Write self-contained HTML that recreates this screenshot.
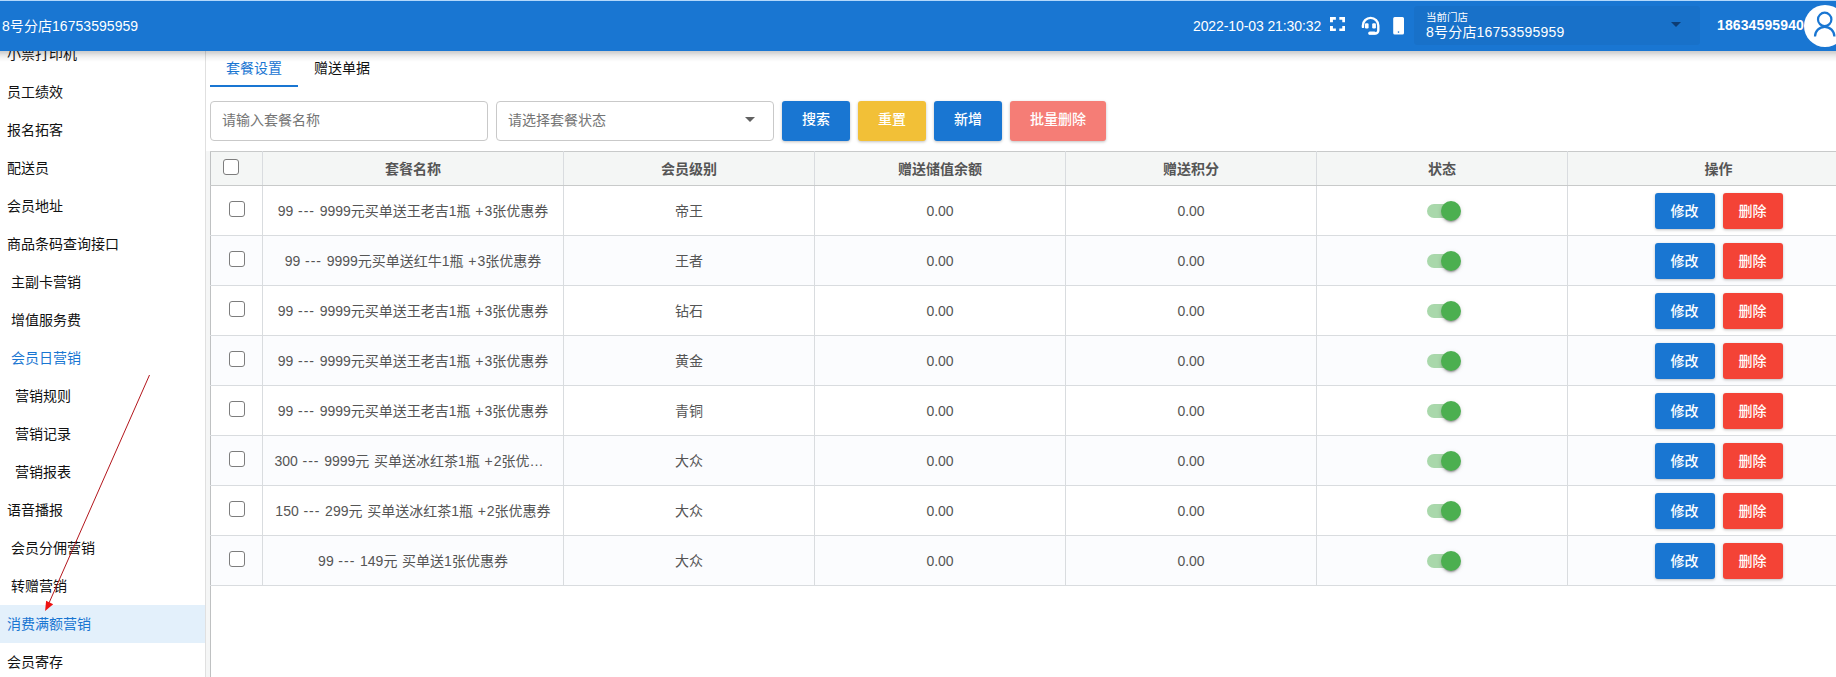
<!DOCTYPE html>
<html lang="zh-CN">
<head>
<meta charset="utf-8">
<title>消费满额营销</title>
<style>
*{box-sizing:border-box;margin:0;padding:0}
html,body{width:1836px;height:677px;overflow:hidden;background:#fff}
body{font-family:"Liberation Sans","Noto Sans CJK SC",sans-serif;font-size:14px;color:#212121;position:relative}
.hdr{position:absolute;left:0;top:0;width:1836px;height:50.5px;border-top:1px solid #b3d8fb;background:#1976d2;color:#fff;z-index:10}
.hsh{position:absolute;left:0;top:51px;width:1836px;height:11px;z-index:9;background:linear-gradient(rgba(0,0,0,.2),rgba(0,0,0,.16) 18%,rgba(0,0,0,.1) 36%,rgba(0,0,0,.06) 55%,rgba(0,0,0,.03) 73%,rgba(0,0,0,0))}
.hdr .title{position:absolute;left:2px;top:0;line-height:51px;font-size:14px;letter-spacing:.05px}
.hdr .time{position:absolute;left:1193px;top:0;line-height:51px;font-size:14px;letter-spacing:-.1px}
.hdr .ico{position:absolute;top:0}
.hdr .store{position:absolute;left:1414px;top:5px;width:286px;height:39px;background:rgba(0,0,0,.04);border-radius:3px}
.hdr .store .l1{position:absolute;left:12px;top:5px;font-size:10.5px;line-height:13px}
.hdr .store .l2{position:absolute;left:12px;top:17px;font-size:14px;line-height:18px;letter-spacing:.2px}
.hdr .store .arr{position:absolute;left:257px;top:16px;width:0;height:0;border-left:5px solid transparent;border-right:5px solid transparent;border-top:5px solid #0d3c73}
.hdr .phone{position:absolute;left:1717px;top:0;line-height:49px;font-size:14px;font-weight:bold;letter-spacing:.12px}
.hdr .avatar{position:absolute;left:1804.3px;top:3.900px;width:42px;height:42px;border-radius:50%;background:#fff}
.side{position:absolute;left:0;top:51px;width:206px;height:626px;border-right:1px solid #e0e0e0;background:#fff;overflow:hidden}
.side .it{position:absolute;left:0;width:205px;height:38px;line-height:38px;font-size:14px;color:#111;white-space:nowrap}
.side .it.act{background:#e3f0fb;color:#1976d2}
.side .it.blue{color:#1976d2}
.tabs{position:absolute;left:210px;top:51px;height:36px}
.tab{position:absolute;top:0;height:36px;line-height:34px;font-size:14px;white-space:nowrap}
.tab.a{left:0;width:88px;text-align:center;color:#1976d2;border-bottom:2px solid #1976d2}
.tab.b{left:104px;color:#111}
.inp{position:absolute;top:101px;height:40px;border:1px solid #c9c9c9;border-radius:4px;background:#fff;color:#757575;font-size:14px;line-height:36px;padding-left:11px}
.btn{position:absolute;top:101px;height:40px;border-radius:3px;color:#fff;font-size:14px;font-weight:500;line-height:37px;text-align:center;box-shadow:0 1px 3px rgba(0,0,0,.25)}
table{position:absolute;left:210px;top:151px;border-collapse:collapse;table-layout:fixed;width:1659px}
.vline{position:absolute;left:206px;top:151px;width:5px;height:526px;background:#f5f6f6;border-right:1px solid #bfc1c2}
td,th{border:1px solid #d9dcdf;text-align:center;font-size:14px;color:#555;height:50px;white-space:nowrap;overflow:hidden;text-overflow:ellipsis;padding:0 10px 2px;position:relative}
th{height:34px;background:#f4f6f5;color:#555;font-weight:bold;padding-bottom:1px;border-top-color:#c8caca;border-bottom-color:#c8caca}
tr.alt td{background:#fbfcfe}
td:first-child,th:first-child{border-left-color:#bfc1c2}
td.n{padding-bottom:0}
td.nm{word-spacing:.8px}
td.nm .w{letter-spacing:1px}
.cb{display:inline-block;width:16px;height:16px;border:1.300px solid #7d7d7d;border-radius:3px;background:#fff;vertical-align:middle}
td .cb{position:relative;top:-1px;left:.5px}
th .cb{position:absolute;left:12px;top:7px}
.sw{display:inline-block;position:relative;width:56px;height:40px;vertical-align:middle;top:1px;left:1px}
.sw i{position:absolute;left:12px;top:13px;width:32px;height:14px;border-radius:7px;background:#a9d8ab}
.sw b{position:absolute;left:26px;top:10px;width:20px;height:20px;border-radius:50%;background:#4caf50;box-shadow:0 3px 1px -2px rgba(0,0,0,.2),0 2px 2px 0 rgba(0,0,0,.14),0 1px 5px 0 rgba(0,0,0,.12)}
.ab{display:inline-block;width:60px;height:36px;line-height:36px;border-radius:3px;color:#fff;font-size:14px;font-weight:500;vertical-align:middle;box-shadow:0 1px 3px rgba(0,0,0,.25);position:relative;top:1px}
.ab.e{background:#1976d2;margin-right:8px}
.ab.d{background:#f44336}
</style>
</head>
<body>
<div class="hdr">
  <div class="title">8号分店16753595959</div>
  <div class="time">2022-10-03 21:30:32</div>
  <svg class="ico" style="left:1330px;top:16px" width="15.200" height="14.400" viewBox="0 0 15 15" preserveAspectRatio="none"><path d="M0 5.600V0h5.800v2.900H2.900v2.700zM9.200 0H15v5.600h-2.900V2.900H9.200zM15 9.400V15H9.200v-2.900h2.900V9.400zM5.800 15H0V9.400h2.900v2.700h2.900z" fill="#fff"/></svg>
  <svg class="ico" style="left:1361px;top:15px" width="20" height="20" viewBox="0 0 20 20"><path d="M1.900 10.900V9.600a7.700 7.700 0 0 1 15.400 0v4.900a3 3 0 0 1-3 3H8.600" fill="none" stroke="#fff" stroke-width="2.400" stroke-linecap="round"/><path d="M8.800 17.100H13.500" stroke="#fff" stroke-width="3" stroke-linecap="round"/><rect x="3.900" y="7.200" width="3.700" height="5.300" rx="1.200" fill="#fff"/><rect x="11.200" y="7.200" width="3.700" height="5.300" rx="1.200" fill="#fff"/></svg>
  <svg class="ico" style="left:1393px;top:16px" width="12" height="18" viewBox="0 0 12 18"><path d="M1.700 0h7.800a1.500 1.500 0 0 1 1.500 1.500v14.400a1.500 1.500 0 0 1-1.500 1.500H1.700a1.500 1.500 0 0 1-1.500-1.500V1.500A1.500 1.500 0 0 1 1.700 0z" fill="#fff"/><circle cx="5.500" cy="15.100" r=".8" fill="#1976d2"/></svg>
  <div class="store"><div class="l1">当前门店</div><div class="l2">8号分店16753595959</div><div class="arr"></div></div>
  <div class="phone">18634595940</div>
  <div class="avatar"><svg width="42" height="42" viewBox="0 0 42 42"><circle cx="20.700" cy="14.400" r="6.700" fill="none" stroke="#1976d2" stroke-width="2.200"/><path d="M11 31.500a9.700 9.700 0 0 1 19.400 0" fill="none" stroke="#1976d2" stroke-width="2.200"/></svg></div>
</div>
<div class="hsh"></div>
<div class="side">
  <div class="it" style="top:-16px;padding-left:7px">小票打印机</div>
  <div class="it" style="top:22px;padding-left:7px">员工绩效</div>
  <div class="it" style="top:60px;padding-left:7px">报名拓客</div>
  <div class="it" style="top:98px;padding-left:7px">配送员</div>
  <div class="it" style="top:136px;padding-left:7px">会员地址</div>
  <div class="it" style="top:174px;padding-left:7px">商品条码查询接口</div>
  <div class="it" style="top:212px;padding-left:11px">主副卡营销</div>
  <div class="it" style="top:250px;padding-left:11px">增值服务费</div>
  <div class="it blue" style="top:288px;padding-left:11px">会员日营销</div>
  <div class="it" style="top:326px;padding-left:15px">营销规则</div>
  <div class="it" style="top:364px;padding-left:15px">营销记录</div>
  <div class="it" style="top:402px;padding-left:15px">营销报表</div>
  <div class="it" style="top:440px;padding-left:7px">语音播报</div>
  <div class="it" style="top:478px;padding-left:11px">会员分佣营销</div>
  <div class="it" style="top:516px;padding-left:11px">转赠营销</div>
  <div class="it act" style="top:554px;padding-left:7px">消费满额营销</div>
  <div class="it" style="top:592px;padding-left:7px">会员寄存</div>
  <svg style="position:absolute;left:0;top:0" width="206" height="626" viewBox="0 0 206 626"><line x1="149.500" y1="324" x2="49" y2="552" stroke="#b3161c" stroke-width="1"/><path d="M45.100 560L46.100 549.800 53.200 553.300z" fill="#ee1111"/></svg>
</div>
<div class="tabs"><div class="tab a">套餐设置</div><div class="tab b">赠送单据</div></div>
<div class="inp" style="left:210px;width:278px">请输入套餐名称</div>
<div class="inp" style="left:496px;width:278px">请选择套餐状态<span style="position:absolute;left:248px;top:15px;width:0;height:0;border-left:5px solid transparent;border-right:5px solid transparent;border-top:5px solid #616161"></span></div>
<div class="btn" style="left:782px;width:68px;background:#1976d2">搜索</div>
<div class="btn" style="left:858px;width:68px;background:#f2c037">重置</div>
<div class="btn" style="left:934px;width:68px;background:#1976d2">新增</div>
<div class="btn" style="left:1010px;width:96px;background:#f57d76">批量删除</div>
<div class="vline"></div>
<table>
<colgroup><col style="width:52px"><col style="width:301px"><col style="width:251px"><col style="width:251px"><col style="width:251px"><col style="width:251px"><col style="width:302px"></colgroup>
<tr><th><span class="cb"></span></th><th>套餐名称</th><th>会员级别</th><th>赠送储值余额</th><th>赠送积分</th><th>状态</th><th>操作</th></tr>
<tr><td><span class="cb"></span></td><td class="nm">99 <span class="w">---</span> 9999元买单送王老吉1瓶 <span class="w">+</span>3张优惠券</td><td>帝王</td><td class="n">0.00</td><td class="n">0.00</td><td><span class="sw"><i></i><b></b></span></td><td><span class="ab e">修改</span><span class="ab d">删除</span></td></tr>
<tr class="alt"><td><span class="cb"></span></td><td class="nm">99 <span class="w">---</span> 9999元买单送红牛1瓶 <span class="w">+</span>3张优惠券</td><td>王者</td><td class="n">0.00</td><td class="n">0.00</td><td><span class="sw"><i></i><b></b></span></td><td><span class="ab e">修改</span><span class="ab d">删除</span></td></tr>
<tr><td><span class="cb"></span></td><td class="nm">99 <span class="w">---</span> 9999元买单送王老吉1瓶 <span class="w">+</span>3张优惠券</td><td>钻石</td><td class="n">0.00</td><td class="n">0.00</td><td><span class="sw"><i></i><b></b></span></td><td><span class="ab e">修改</span><span class="ab d">删除</span></td></tr>
<tr class="alt"><td><span class="cb"></span></td><td class="nm">99 <span class="w">---</span> 9999元买单送王老吉1瓶 <span class="w">+</span>3张优惠券</td><td>黄金</td><td class="n">0.00</td><td class="n">0.00</td><td><span class="sw"><i></i><b></b></span></td><td><span class="ab e">修改</span><span class="ab d">删除</span></td></tr>
<tr><td><span class="cb"></span></td><td class="nm">99 <span class="w">---</span> 9999元买单送王老吉1瓶 <span class="w">+</span>3张优惠券</td><td>青铜</td><td class="n">0.00</td><td class="n">0.00</td><td><span class="sw"><i></i><b></b></span></td><td><span class="ab e">修改</span><span class="ab d">删除</span></td></tr>
<tr class="alt"><td><span class="cb"></span></td><td class="nm"><span style="position:relative;left:-4px">300 <span class="w">---</span> 9999元 买单送冰红茶1瓶 <span class="w">+</span>2张优…</span></td><td>大众</td><td class="n">0.00</td><td class="n">0.00</td><td><span class="sw"><i></i><b></b></span></td><td><span class="ab e">修改</span><span class="ab d">删除</span></td></tr>
<tr><td><span class="cb"></span></td><td class="nm">150 <span class="w">---</span> 299元 买单送冰红茶1瓶 <span class="w">+</span>2张优惠券</td><td>大众</td><td class="n">0.00</td><td class="n">0.00</td><td><span class="sw"><i></i><b></b></span></td><td><span class="ab e">修改</span><span class="ab d">删除</span></td></tr>
<tr class="alt"><td><span class="cb"></span></td><td class="nm">99 <span class="w">---</span> 149元 买单送1张优惠券</td><td>大众</td><td class="n">0.00</td><td class="n">0.00</td><td><span class="sw"><i></i><b></b></span></td><td><span class="ab e">修改</span><span class="ab d">删除</span></td></tr>
</table>
</body>
</html>
